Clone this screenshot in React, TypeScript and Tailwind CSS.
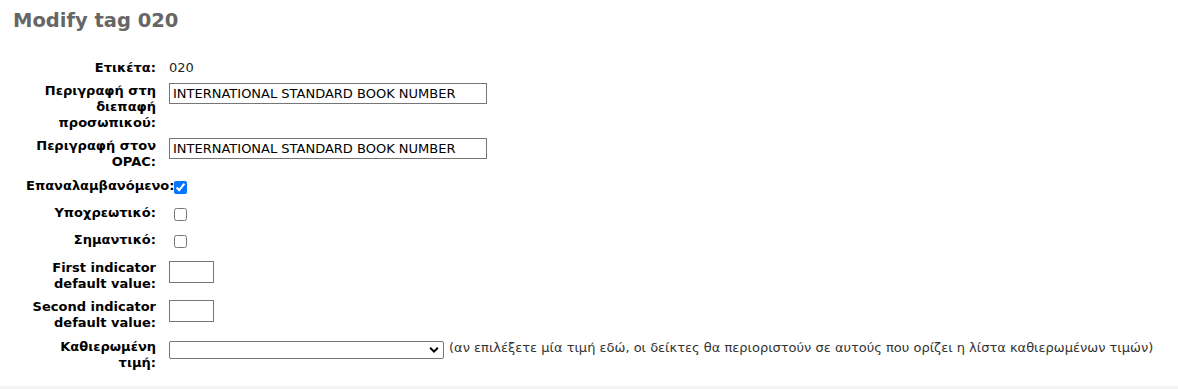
import React from "react";

type Row = {
  label: string;
  kind: "text" | "input" | "check" | "small" | "select";
  value?: string;
  checked?: boolean;
  pad: string;
};

const rows: Row[] = [
  { label: "Ετικέτα:", kind: "text", value: "020", pad: "pb-[7px]" },
  { label: "Περιγραφή στη διεπαφή προσωπικού:", kind: "input", value: "INTERNATIONAL STANDARD BOOK NUMBER", pad: "pb-[7px]" },
  { label: "Περιγραφή στον OPAC:", kind: "input", value: "INTERNATIONAL STANDARD BOOK NUMBER", pad: "pb-[8px]" },
  { label: "Επαναλαμβανόμενο:", kind: "check", checked: true, pad: "pb-[7px] min-h-[27px]" },
  { label: "Υποχρεωτικό:", kind: "check", pad: "pb-[7px] min-h-[27px]" },
  { label: "Σημαντικό:", kind: "check", pad: "pb-[8px] min-h-[28px]" },
  { label: "First indicator default value:", kind: "small", pad: "pb-[7px]" },
  { label: "Second indicator default value:", kind: "small", pad: "pb-[8px]" },
  { label: "Καθιερωμένη τιμή:", kind: "select", pad: "pb-[15px]" },
];

function Control({ row }: { row: Row }) {
  if (row.kind === "text") {
    return <span className="leading-[16px] text-[#222]">{row.value}</span>;
  }
  if (row.kind === "input") {
    return (
      <input
        type="text"
        defaultValue={row.value}
        className="w-[318px] h-[21px] border border-[#767676] px-[3px] text-[13px] leading-[19px] text-black outline-none"
      />
    );
  }
  if (row.kind === "check") {
    return <input type="checkbox" defaultChecked={row.checked} className="ml-[5px] mt-[3px] w-[13px] h-[13px]" />;
  }
  if (row.kind === "small") {
    return <input type="text" className="mt-[1px] w-[45px] h-[22px] border border-[#767676] px-[2px] outline-none" />;
  }
  return (
    <div className="flex items-start">
      <div className="relative mt-[2px] w-[275px] h-[18px]">
        <select className="appearance-none w-full h-full border border-[#767676] rounded-[2px] bg-white text-[13px] outline-none">
          <option value=""></option>
        </select>
        <svg
          className="absolute right-[5px] top-[5px] pointer-events-none"
          width="10"
          height="8"
          viewBox="0 0 10 8"
          fill="none"
        >
          <path d="M1.2 1.8 L5 5.6 L8.8 1.8" stroke="#000" strokeWidth="2" />
        </svg>
      </div>
      <span className="ml-[5px] leading-[16px] mt-[1px] text-[#333]">
        (αν επιλέξετε μία τιμή εδώ, οι δείκτες θα περιοριστούν σε αυτούς που ορίζει η λίστα καθιερωμένων τιμών)
      </span>
    </div>
  );
}

export default function App() {
  return (
    <div className="min-h-[389px] bg-white font-['DejaVu_Sans',sans-serif] text-[13px] text-black">
      <h1 className="pl-[13px] pt-[9px] text-[19.5px] leading-[24px] font-bold text-[#666]">Modify tag 020</h1>
      <ol className="mt-[27px] flex flex-col">
        {rows.map((row) => (
          <li key={row.label} className={`flex items-start ${row.pad}`}>
            <label className="ml-[26px] mr-[13px] w-[130px] shrink-0 text-right font-bold leading-[16px]">
              {row.label}
            </label>
            <Control row={row} />
          </li>
        ))}
      </ol>
      <div className="h-[3px] bg-[#f3f3f3]" />
    </div>
  );
}
